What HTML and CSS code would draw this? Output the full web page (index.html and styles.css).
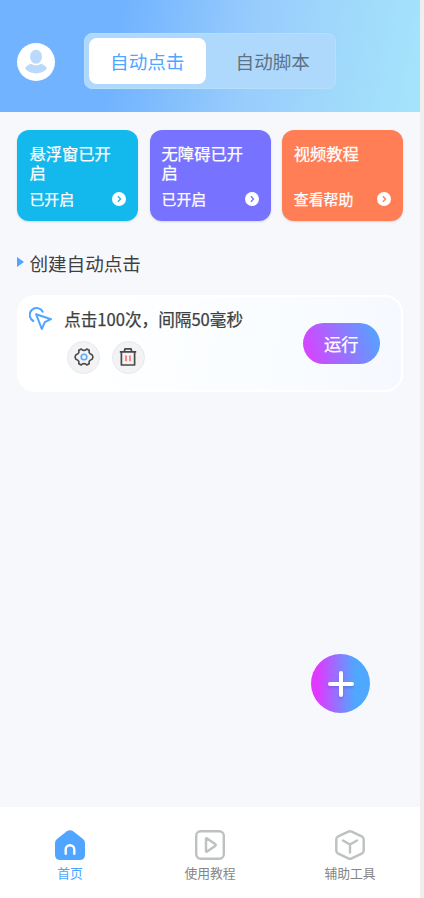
FILE: index.html
```html
<!DOCTYPE html>
<html lang="zh-CN">
<head>
<meta charset="utf-8">
<title>自动点击</title>
<link rel="stylesheet" href="styles.css">
</head>
<body>
<div class="app">
  <header class="header">
    <svg class="avatar" viewBox="0 0 38 38"><circle cx="19" cy="19" r="19" fill="#fff"/><ellipse cx="19" cy="13.700" rx="6" ry="7" fill="#b9dafc"/><path d="M8 25.500c1-2.500 3.500-4.200 6.300-4.800 2.900 2.200 6.500 2.200 9.400 0 2.800.6 5.300 2.300 6.300 4.800-6 6.500-16 6.500-22 0z" fill="#b9dafc"/></svg>
    <nav class="tabs">
      <span class="tab tab-active">自动点击</span>
      <span class="tab">自动脚本</span>
    </nav>
  </header>
  <main class="main">
    <section class="cards">
      <div class="card cyan">
        <div class="card-title">悬浮窗已开启</div>
        <div class="card-foot"><span>已开启</span><svg class="go" viewBox="0 0 14 14"><circle cx="7" cy="7" r="7" fill="#fff"/><path d="M5.900 4.300 8.500 7 5.900 9.700" fill="none" stroke="currentColor" stroke-width="1.300"/></svg></div>
      </div>
      <div class="card violet">
        <div class="card-title">无障碍已开启</div>
        <div class="card-foot"><span>已开启</span><svg class="go" viewBox="0 0 14 14"><circle cx="7" cy="7" r="7" fill="#fff"/><path d="M5.900 4.300 8.500 7 5.900 9.700" fill="none" stroke="currentColor" stroke-width="1.300"/></svg></div>
      </div>
      <div class="card orange">
        <div class="card-title">视频教程</div>
        <div class="card-foot"><span>查看帮助</span><svg class="go" viewBox="0 0 14 14"><circle cx="7" cy="7" r="7" fill="#fff"/><path d="M5.900 4.300 8.500 7 5.900 9.700" fill="none" stroke="currentColor" stroke-width="1.300"/></svg></div>
      </div>
    </section>
    <h2 class="heading"><svg class="marker" viewBox="0 0 7 10"><path d="M0 0 7 5 0 10z" fill="#4fa5ff"/></svg>创建自动点击</h2>
    <section class="task">
      <svg class="pointer" viewBox="0 0 24 24" fill="none" stroke="#4fa5ff" stroke-linecap="round" stroke-linejoin="round"><path d="M7.200 7.300 22 12.200 15.800 15.200 12.800 22z" stroke-width="2"/><path d="M4.300 14A6.900 6.900 0 1 1 13.700 4.700" stroke-width="2"/></svg>
      <div class="task-body">
        <div class="task-title">点击100次，间隔50毫秒</div>
        <div class="tools">
          <span class="tool"><svg width="20" height="20" viewBox="0 0 20 20" fill="none"><path d="M7.300 2L8.300 3Q10 3.800 11.700 3L12.700 2L15.200 3.300L15.100 5.300Q15.500 6.800 17 7.300L18 7.700Q19.700 10 18 12.300L17 12.700Q15.500 13.200 15.100 14.700L15.200 16.700L12.700 18L11.700 17Q10 16.200 8.300 17L7.300 18L4.800 16.700L4.900 14.700Q4.500 13.200 3 12.700L2 12.300Q.3 10 2 7.700L3 7.300Q4.500 6.800 4.900 5.300L4.800 3.300Z" stroke="#4a4a4a" stroke-width="1.600" stroke-linejoin="round"/><circle cx="10" cy="10" r="2.800" stroke="#5aacff" stroke-width="1.600"/></svg></span>
          <span class="tool"><svg width="18" height="20" viewBox="0 0 18 20" fill="none"><path d="M.8 4.900h16.400M2.400 5v13h13.200V5M5.300 4.500l.7-2.700h6l.7 2.700" stroke="#4a4a4a" stroke-width="1.700" stroke-linejoin="round"/><path d="M7 8.500v5.800M11 8.500v5.800" stroke="#ff7070" stroke-width="1.600"/></svg></span>
        </div>
      </div>
      <button class="run">运行</button>
    </section>
    <button class="add"><svg width="28" height="30" viewBox="0 0 28 30"><path d="M14 4v22M3 15h22" stroke="#fff" stroke-width="4" stroke-linecap="round"/></svg></button>
  </main>
  <footer class="nav">
    <div class="nav-item active"><svg width="30" height="30" viewBox="0 0 30 30"><path d="M11.800 1.300Q15-1 18.200 1.300L28 9Q30 10.500 30 13v11.500Q30 30 24.500 30h-19Q0 30 0 24.500V13Q0 10.500 2 9z" fill="#4fa5ff"/><path d="M10.700 23.700v-4.200a4.300 4.300 0 0 1 8.600 0v4.200" fill="none" stroke="#fff" stroke-width="2.400" stroke-linecap="round"/></svg><span>首页</span></div>
    <div class="nav-item"><svg width="30" height="30" viewBox="0 0 30 30" fill="none" stroke="#bdc1c1" stroke-width="2.400" stroke-linejoin="round"><rect x="1.200" y="1.200" width="27.600" height="27.600" rx="4.500"/><path d="M11 9v12q0 1.200 1 .6l8.200-5.700q1.200-.9 0-1.800L12 8.400q-1-.6-1 .6z"/></svg><span>使用教程</span></div>
    <div class="nav-item"><svg width="30" height="30" viewBox="0 0 30 30" fill="none" stroke="#bdc1c1" stroke-width="2.400" stroke-linecap="round" stroke-linejoin="round"><path d="M13.300 1.700q1.700-.8 3.400 0l10.500 5q1.500.8 1.500 2.500v11.600q0 1.700-1.500 2.500l-10.500 5q-1.700.8-3.400 0l-10.500-5q-1.500-.8-1.500-2.500V9.200q0-1.700 1.500-2.500zM8 10.500l7 4 7-4M15 14.500v8"/></svg><span>辅助工具</span></div>
  </footer>
</div>
</body>
</html>
```
FILE: styles.css
```css
* { box-sizing: border-box; }
body {
  margin: 0;
  background: #efefef;
  font-family: "Noto Sans CJK SC", sans-serif;
}
button { border: 0; padding: 0; font: inherit; color: #fff; }
svg { display: block; flex: none; }
.app {
  width: 420px;
  height: 898px;
  display: flex;
  flex-direction: column;
  background: #f6f8fc;
}
.header {
  height: 112.400px;
  flex: none;
  display: flex;
  align-items: flex-start;
  padding: 33px 0 0 17px;
  background: linear-gradient(100deg, #71b3ff 0%, #71b3ff 28%, #99cdfc 60%, #a5e5fb 100%);
}
.avatar { width: 38px; height: 38px; margin-top: 10px; }
.tabs {
  width: 252px;
  height: 56px;
  margin-left: 29px;
  padding: 4px;
  display: flex;
  border: 1px solid #b5e0fc;
  border-radius: 8px;
  background: #afd9fc;
}
.tab {
  width: 117px;
  height: 46px;
  margin-left: 9px;
  border-radius: 8px;
  text-align: center;
  font-size: 18.600px;
  line-height: 46px;
  color: #5d7385;
}
.tab-active { margin-left: 0; background: #fff; color: #4fa5ff; }
.main {
  flex: 1;
  display: flex;
  flex-direction: column;
  padding: 17.500px 17px 0 17.400px;
}
.cards { display: grid; grid-template-columns: repeat(3, 121px); gap: 11.200px; }
.card {
  height: 91px;
  padding: 14px 12px 12px;
  border-radius: 12px;
  display: flex;
  flex-direction: column;
  justify-content: space-between;
  box-shadow: 0 1px 2px rgba(60, 80, 110, .2);
}
.cyan { background: #13b8ed; color: #13b8ed; }
.violet { background: #7772ff; color: #7772ff; }
.orange { background: #ff7e55; color: #ff7e55; }
.card-title { font-size: 16.300px; line-height: 19px; }
.card-title, .card-foot span {
  color: #fff;
  -webkit-text-stroke: .25px #fff;
}
.card-foot {
  display: flex;
  align-items: center;
  justify-content: space-between;
  font-size: 14.900px;
  line-height: 20px;
}
.go { width: 14px; height: 14px; }
.heading {
  display: flex;
  align-items: center;
  gap: 5px;
  margin: 29px 0 0;
  font-size: 18.600px;
  font-weight: 400;
  line-height: 25px;
  color: #404040;
}
.marker { width: 7px; height: 10px; }
.task {
  height: 97px;
  margin-top: 20px;
  padding: 10px 21.500px 0 10px;
  display: flex;
  align-items: flex-start;
  border: 2px solid #fff;
  border-radius: 18px;
  background: linear-gradient(100deg, #fff 15%, #f9fdff 65%, #f5f9ff);
}
.pointer { width: 24px; height: 24px; }
.task-body { flex: 1; margin-left: 10.800px; }
.task-title {
  font-size: 16.600px;
  line-height: 24px;
  color: #404040;
  white-space: nowrap;
  -webkit-text-stroke: .25px #404040;
}
.tools { display: flex; gap: 11.500px; margin: 10px 0 0 3px; }
.tool {
  width: 33px;
  height: 33px;
  display: flex;
  align-items: center;
  justify-content: center;
  border: 1px solid #e2e9f4;
  border-radius: 50%;
  background: #f3f3f3;
}
.run {
  width: 76.500px;
  height: 41px;
  margin-top: 16px;
  border-radius: 21px;
  background: linear-gradient(70deg, #d049ff 12%, #5b9eff 90%);
  font-size: 17.200px;
  line-height: 41px;
  -webkit-text-stroke: .25px #fff;
}
.add {
  width: 59px;
  height: 59px;
  margin: auto 33px 94px 0;
  align-self: flex-end;
  display: flex;
  align-items: center;
  justify-content: center;
  border-radius: 50%;
  background: linear-gradient(90deg, #e138ff 10%, #4fa8ff 75%);
}
.add svg { filter: drop-shadow(0 2px 1px rgba(60, 60, 150, .25)); }
.nav {
  height: 90.600px;
  flex: none;
  display: grid;
  grid-template-columns: repeat(3, 1fr);
  padding-top: 23px;
  background: #fff;
}
.nav-item {
  display: flex;
  flex-direction: column;
  align-items: center;
  gap: 3px;
  font-size: 12.800px;
  line-height: 20px;
  color: #858585;
}
.active { color: #4fa5ff; }
```
